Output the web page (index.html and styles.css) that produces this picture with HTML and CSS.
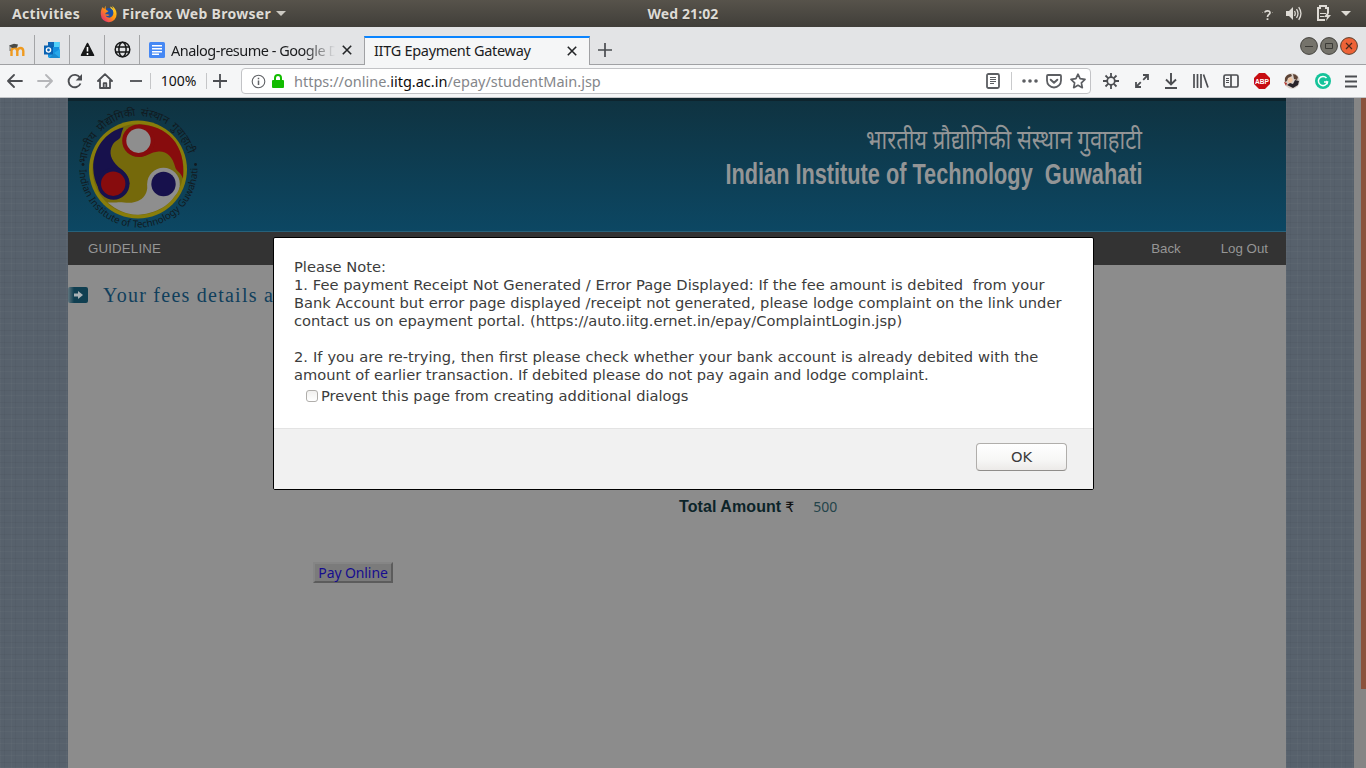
FILE: index.html
```html
<!DOCTYPE html>
<html lang="en">
<head>
<meta charset="utf-8">
<title>IITG Epayment Gateway</title>
<link rel="stylesheet" href="styles.css">
</head>
<body>
<div class="desktop">
<header class="topbar">
  <div class="top-left">
    <span class="activities">Activities</span>
    <svg class="firefox" width="18" height="18" viewBox="0 0 18 18"><defs><linearGradient id="ff" x1="1" y1="0" x2="0" y2="1"><stop offset="0" stop-color="#ffe226"/><stop offset=".45" stop-color="#ff980e"/><stop offset="1" stop-color="#e31587"/></linearGradient></defs><circle cx="9" cy="8.6" r="5.6" fill="#1c4fa3"/><path d="M6 .8c-1.2 1-1.5 2-1.3 3C3.600 3.500 3 2.600 2.800 2 1.500 3.600.600 6 .800 9.500A7.900 7.900 0 0 0 16.600 9C16.500 5.500 15 3 12 .7c1 1.600 1.500 3.500 1.200 5.300.900 4-1.500 7-4.500 6.600-1.700-.2-2.700-1-3-2 1.500.8 2.700.3 4-.7-1.700-.7-3-.9-4-.4-.8-1 .2-2 1.500-2.200l1.300-1.200C7.500 5.900 6.500 5.500 5.800 4.300 5.500 3 5.500 2 6 .8Z" fill="url(#ff)"/><path d="M10 1.500c3 1 4.500 3.500 4.400 7.500-1-4-2-4.500-3.500-5.500Z" fill="#ffd43b"/></svg>
    <span class="appname">Firefox Web Browser</span>
    <svg width="10" height="5" viewBox="0 0 10 5"><path d="M0 0h10L5 5z" fill="#ccc9c2"/></svg>
  </div>
  <div class="clock">Wed 21:02</div>
  <div class="top-right">
    <svg class="help" width="11" height="12" viewBox="0 0 11 12"><path d="M3 3.500C3 1.500 8 1 8 3.700 8 5.500 5.500 5.200 5.500 8" fill="none" stroke="#dedbd5" stroke-width="1.700"/><path d="M4.600 9.300h1.800v1.700H4.600z" fill="#dedbd5"/><path d="M0 3.500h1M10 3.500h1" stroke="#85817a"/></svg>
    <svg width="16" height="15" viewBox="0 0 16 15"><path d="M0 5h3l4-4v13l-4-4H0z" fill="#dedbd5"/><path d="M8.500 5q1.500 2.500 0 5M10.500 3.200q3 4.300 0 8.600M12.700 1.200q4.500 6.300 0 12.600" fill="none" stroke="#dedbd5" stroke-width="1.300"/></svg>
    <svg width="15" height="17" viewBox="0 0 15 17"><path d="M8 15H1V3h2V1h6v2h2v5" fill="none" stroke="#dedbd5" stroke-width="2"/><path d="M3 8h6v1H3zM3 11h4v1H3z" fill="#dedbd5"/><path d="m10 8-3 4h3l-1 4 5-6h-3l1-2z" fill="#dedbd5"/></svg>
    <svg width="10" height="5" viewBox="0 0 10 5"><path d="M0 0h10L5 5z" fill="#dedbd5"/></svg>
  </div>
</header>

<nav class="tabstrip">
  <div class="pin"><svg width="16" height="16" viewBox="0 0 16 16"><path d="M2.500 14V7.500M2.500 8.500Q3 6 5.500 6T8.300 9V14M8.300 9Q9 6 11.500 6T14.300 9V14" fill="none" stroke="#ef9a20" stroke-width="2.400"/><path d="m0 3.500 5-1.800 4 .8-1 3L3 6z" fill="#4b4b47"/><path d="M1 4v5" stroke="#555" stroke-width=".8"/></svg></div>
  <div class="pin"><svg width="16" height="16" viewBox="0 0 16 16"><path d="M4 0h11.500v15H4z" fill="#1490df"/><path d="M10 0h5.500v5H10z" fill="#50d0fa"/><path d="M4 0h6v5H4z" fill="#1066b5"/><path d="m4 15 12-8v9H5z" fill="#28a8ea"/><path d="m10 11 6 5H5z" fill="#1989cf"/><path d="M0 3.500h9v9H0z" fill="#0a62b2"/><circle cx="4.500" cy="8" r="2.100" fill="none" stroke="#fff" stroke-width="1.400"/></svg></div>
  <div class="pin"><svg width="15" height="15" viewBox="0 0 15 15"><path d="M7.500 1.500 13.500 13.300h-12z" fill="#171819" stroke="#171819" stroke-width="1.600" stroke-linejoin="round"/><path d="M7.500 5v4.500M7.500 11v2" stroke="#fff" stroke-width="1.600"/></svg></div>
  <div class="pin"><svg width="17" height="17" viewBox="0 0 17 17" fill="none" stroke="#171819" stroke-width="1.500"><circle cx="8.500" cy="8.500" r="7.300"/><ellipse cx="8.500" cy="8.500" rx="3.600" ry="7.300"/><path d="M1.500 6h14M1.500 11h14"/></svg></div>
  <div class="tab">
    <svg width="16" height="16" viewBox="0 0 16 16"><rect width="16" height="16" rx="1.500" fill="#4688f4"/><path d="M3 3.800h10M3 6.800h10M3 9.800h10M3 12.300h7" stroke="#fff" stroke-width="1.500"/></svg>
    <span class="tab-label faded">Analog-resume - Google D</span>
    <svg class="x" width="10" height="10" viewBox="0 0 10 10"><path d="m.8.8 8.400 8.400M9.200.8.8 9.200" stroke="#242628" stroke-width="1.600"/></svg>
  </div>
  <div class="tab active">
    <span class="tab-label">IITG Epayment Gateway</span>
    <svg class="x" width="10" height="10" viewBox="0 0 10 10"><path d="m.8.8 8.400 8.400M9.200.8.8 9.200" stroke="#242628" stroke-width="1.600"/></svg>
  </div>
  <svg class="newtab" width="14" height="14" viewBox="0 0 14 14"><path d="M7 0v14M0 7h14" stroke="#4a4c50" stroke-width="1.700"/></svg>
  <div class="winbuttons">
    <svg width="18" height="18" viewBox="0 0 18 18"><circle cx="9" cy="9" r="8.400" fill="#75736b" stroke="#44433f"/><path d="M5 9.500h8" stroke="#3b3a36"/></svg>
    <svg width="18" height="18" viewBox="0 0 18 18"><circle cx="9" cy="9" r="8.400" fill="#75736b" stroke="#44433f"/><path d="M5.500 6.500h7v5h-7z" fill="none" stroke="#3b3a36"/></svg>
    <svg width="18" height="18" viewBox="0 0 18 18"><circle cx="9" cy="9" r="8.400" fill="#ee6337" stroke="#59412f"/><path d="m6 6 6 6m0-6-6 6" stroke="#4b2a1c" stroke-width="1.200"/></svg>
  </div>
</nav>

<div class="toolbar">
  <div class="nav-icons">
    <svg width="16" height="14" viewBox="0 0 16 14" fill="none" stroke="#4c4e52" stroke-width="1.800" stroke-linecap="round" stroke-linejoin="round"><path d="M7 1 1 7l6 6M1.500 7H15"/></svg>
    <svg width="16" height="14" viewBox="0 0 16 14" fill="none" stroke="#b5b6b9" stroke-width="1.800" stroke-linecap="round" stroke-linejoin="round"><path d="m9 1 6 6-6 6M14.500 7H1"/></svg>
    <svg width="16" height="16" viewBox="0 0 16 16"><path d="M13.500 10.500a6.200 6.200 0 1 1-.5-5.800" fill="none" stroke="#4c4e52" stroke-width="1.900"/><path d="M15 1v6.500H8.700z" fill="#4c4e52"/></svg>
    <svg width="16" height="16" viewBox="0 0 16 16" fill="none" stroke="#4c4e52" stroke-width="1.800" stroke-linejoin="round" stroke-linecap="round"><path d="m1 8 7-6.800L15 8M3 7v8h10V7"/><path d="M6.700 15v-4.800h2.600V15" /></svg>
    <svg width="12" height="14" viewBox="0 0 12 14"><path d="M0 7h12" stroke="#4c4e52" stroke-width="1.800"/></svg>
  </div>
  <div class="zoom">100%</div>
  <svg class="plus" width="14" height="14" viewBox="0 0 14 14"><path d="M7 0v14M0 7h14" stroke="#4c4e52" stroke-width="1.800"/></svg>
  <div class="urlbar">
    <svg width="15" height="15" viewBox="0 0 15 15"><circle cx="7.500" cy="7.500" r="6.300" fill="none" stroke="#606266" stroke-width="1.100"/><path d="M7.500 6.500v4.500M7.500 3.800v1.500" stroke="#606266" stroke-width="1.500"/></svg>
    <svg width="12" height="14" viewBox="0 0 12 14"><path d="M3 7V4a3 3 0 0 1 6 0v3" fill="none" stroke="#12bc00" stroke-width="2"/><rect y="6" width="12" height="8" rx="1" fill="#12bc00"/></svg>
    <span class="url">https://online.<b>iitg.ac.in</b>/epay/studentMain.jsp</span>
    <div class="url-icons">
      <svg width="14" height="16" viewBox="0 0 14 16" fill="none" stroke="#5c5e62"><rect x="1" y="1" width="12" height="14" rx="1.500" stroke-width="1.800"/><path d="M4 4.500h6M4 6.500h6M4 8.500h6M4 10.500h4"/></svg>
      <i class="divider"></i>
      <svg width="16" height="4" viewBox="0 0 16 4" fill="#5c5e62"><circle cx="2" cy="2" r="1.800"/><circle cx="8" cy="2" r="1.800"/><circle cx="14" cy="2" r="1.800"/></svg>
      <svg width="16" height="15" viewBox="0 0 16 15" fill="none" stroke="#5c5e62" stroke-width="1.800" stroke-linecap="round" stroke-linejoin="round"><path d="M2 1h12q1 0 1 1v4.500a7 7 0 0 1-14 0V2q0-1 1-1Z"/><path d="m4.700 5.700 3.300 3 3.300-3" stroke-width="2"/></svg>
      <svg width="16" height="16" viewBox="0 0 16 16" fill="none" stroke="#5c5e62" stroke-width="1.700" stroke-linejoin="round"><path d="m8 1.200 2.100 4.500 4.900.7-3.600 3.400.9 4.900L8 12.300l-4.300 2.400.9-4.900L1 6.400l4.900-.7z"/></svg>
    </div>
  </div>
  <div class="ext">
    <svg width="16" height="16" viewBox="0 0 16 16" fill="none" stroke="#4c4e52" stroke-width="1.800"><circle cx="8" cy="8" r="3.800"/><path d="M8 0v4M8 12v4M0 8h4M12 8h4M2.500 2.500l2.600 2.600M10.900 10.900l2.600 2.600M13.500 2.500l-2.600 2.600M5.100 10.900l-2.600 2.600"/></svg>
    <svg width="16" height="16" viewBox="0 0 16 16" fill="none" stroke="#4c4e52" stroke-width="1.800"><path d="M9 2h5v5M14 2 9.200 6.800M7 14H2V9M2 14l4.800-4.800"/></svg>
    <svg width="14" height="16" viewBox="0 0 14 16" fill="none" stroke="#4c4e52" stroke-width="1.900"><path d="M7 0v11M2 6.500l5 5 5-5M1 15h12"/></svg>
    <svg width="16" height="14" viewBox="0 0 16 14" fill="none" stroke="#4c4e52" stroke-width="1.700"><path d="M1 0v14M4.500 0v14M8 0v14M10.500.5 15 13.500"/></svg>
    <svg width="16" height="14" viewBox="0 0 16 14" fill="none" stroke="#4c4e52" stroke-width="1.700"><rect x="1" y="1" width="14" height="12" rx="1.500"/><path d="M8 1v12"/><path d="M3 4.500h3M3 6.500h3M3 8.500h3" stroke-width="1"/></svg>
    <svg width="16" height="16" viewBox="0 0 16 16"><path d="M5 0h6l5 5v6l-5 5H5l-5-5V5z" fill="#c70d12"/><text class="abp" x="8" y="10.800" text-anchor="middle" textLength="14" lengthAdjust="spacingAndGlyphs">ABP</text></svg>
    <svg width="16" height="16" viewBox="0 0 16 16"><circle cx="8" cy="8" r="7.800" fill="#d9cfc8"/><path d="M1 5Q3 1 7 1l1 2-4 2-1 3-2 1zM9 1q3 0 5 3l-1 3-3-1z" fill="#5d4436"/><path d="M4 6l3-2 2 3-2 3-3-1z" fill="#f0c5a2"/><path d="M3 12l3-2 3 1 2-4 4 1-1 4-5 3z" fill="#292329"/><path d="M0 9l3 1-1 3z" fill="#b3342d"/></svg>
    <svg width="16" height="16" viewBox="0 0 16 16"><circle cx="8" cy="8" r="8" fill="#15c39a"/><path d="M11.500 5a4.600 4.600 0 1 0 1 4H9" fill="none" stroke="#fff" stroke-width="1.500"/><path d="m11 8 1.700 1-.7 2.500" fill="none" stroke="#fff"/></svg>
    <svg width="12" height="13" viewBox="0 0 12 13"><path d="M0 1.500h12M0 6.500h12M0 11.500h12" stroke="#4c4e52" stroke-width="1.900"/></svg>
  </div>
</div>

<main class="viewport">
  <div class="fabric"></div>
  <section class="page">
    <div class="banner">
      <svg class="logo" width="140" height="129" viewBox="-.5 0 140 129">
        <defs><path id="low" d="M11 66.500A59 59 0 0 0 129 66.500"/><path id="up" d="M17.700 61.500A52 52 0 0 1 121.300 61.500V72"/></defs>
        <circle cx="69.500" cy="67.500" r="49" fill="#887d0b"/>
        <circle cx="69.500" cy="67.500" r="45.500" fill="#75690b"/>
        <path d="M55 25.500C38 29 24.500 46 24.700 66c.3 8 2.300 14 4.300 18l16 13 16-15c-1-10-7-14-11-17-8-7-10-15-6-22 3-5 7-5 8-8q1-5 3-9.500Z" fill="#17114c"/>
        <path d="M70 22.500C98 23 118 42 114.500 76.500 112 70 108 69 107 66 104 54 98 49 90 49.500 82 50 78 55 70 55Z" fill="#870c0d"/>
        <path d="M39 100.500C48 108 58 113 70 112.700 92 111 106 100 111 84L95 66 79 82c0 6-1 11-6 15-11 7-18 2-25 3.500Z" fill="#8e8e8e"/>
        <circle cx="70" cy="38.700" r="16.300" fill="#870c0d"/><circle cx="45" cy="81.700" r="16" fill="#17114c"/><circle cx="95" cy="82" r="16.300" fill="#8e8e8e"/>
        <circle cx="70" cy="38.700" r="12.200" fill="#8e8e8e"/><circle cx="44.700" cy="81.700" r="12.200" fill="#870c0d"/><circle cx="95" cy="82" r="12.200" fill="#17114c"/>
        <text class="ring"><textPath href="#low" startOffset="1">Indian Institute of Technology Guwahati</textPath></text>
        <text class="ring hindi-ring"><textPath href="#up">भारतीय प्रौद्योगिकी संस्थान गुवाहाटी</textPath></text>
        <circle cx="14.500" cy="62.500" r="1.400" fill="#111a20"/><circle cx="127" cy="62.500" r="1.400" fill="#111a20"/>
      </svg>
      <svg class="institute" width="420" height="76" viewBox="0 0 420 76">
        <text class="hindi" x="142" y="30" textLength="276" lengthAdjust="spacingAndGlyphs">भारतीय प्रौद्योगिकी संस्थान गुवाहाटी</text>
        <text class="english" x="1.500" y="65" xml:space="preserve" textLength="417" lengthAdjust="spacingAndGlyphs">Indian Institute of Technology  Guwahati</text>
      </svg>
    </div>
    <div class="menu"><span class="guide">GUIDELINE</span><span class="menu-right"><span>Back</span><span>Log Out</span></span></div>
    <div class="heading"><svg width="20" height="16" viewBox="0 0 20 16"><defs><linearGradient id="ar"><stop offset="0" stop-color="#5f757e"/><stop offset=".3" stop-color="#103f51"/></linearGradient></defs><rect width="20" height="16" rx="2" fill="url(#ar)"/><path d="M6 6.500h4V4l5 4-5 4V9.500H6z" fill="#a9b1b5"/></svg><h1>Your fees details a</h1></div>
    <div class="total"><b>Total Amount</b><span class="rupee">₹</span><span class="amount">500</span></div>
    <div class="pay">Pay Online</div>
  </section>
  <div class="fabric"></div>
  <div class="scroll"><div class="thumb"></div></div>
  <div class="dialog">
    <div class="message"><p>Please Note:
<span class="note">1. Fee payment Receipt Not Generated / Error Page Displayed: If the fee amount is debited  from your
Bank Account but error page displayed /receipt not generated, please lodge complaint on the link under
contact us on epayment portal. (https://auto.iitg.ernet.in/epay/ComplaintLogin.jsp)</span>

<span class="retry">2. If you are re-trying, then first please check whether your bank account is already debited with the</span>
amount of earlier transaction. If debited please do not pay again and lodge complaint.</p>
    <div class="prevent"><span class="check"></span><span class="note">Prevent this page from creating additional dialogs</span></div></div>
    <div class="actions"><div class="ok">OK</div></div>
  </div>
</main>
</div>
</body>
</html>
```
FILE: styles.css
```css
* { box-sizing: border-box; }
body { margin: 0; font-family: "Noto Sans", sans-serif; }
svg { display: block; flex: none; }
.desktop { width: 1366px; height: 768px; overflow: hidden; display: flex; flex-direction: column; }
.topbar { height: 27px; flex: none; display: grid; grid-template-columns: 1fr auto 1fr; align-items: center; background: linear-gradient(#57534b, #403e39); color: #dedbd5; font-weight: 700; font-size: 14px; white-space: nowrap; text-shadow: 0 1px 1px #2225; }
.top-left { display: flex; align-items: center; padding-left: 12px; }
.activities { width: 88px; letter-spacing: .3px; }
.appname { margin-left: 4px; width: 154px; letter-spacing: .3px; }
.clock { letter-spacing: .1px; }
.top-right { display: flex; justify-content: flex-end; align-items: center; padding-right: 15px; }
.top-right svg { margin-left: 9px; }
.top-right svg:nth-child(2) { margin-left: 13px; }
.top-right svg:nth-child(3) { margin-left: 15px; }
.top-right .help { margin-top: 3px; }
.tabstrip { height: 38px; flex: none; display: flex; align-items: flex-end; background: #e3e4e6; box-shadow: inset 0 -1px #a0a1a4; color: #1b1c1e; }
.pin { width: 35px; height: 29px; border-right: 1px solid #a4a5a7; display: flex; align-items: center; justify-content: center; margin-bottom: 1px; }
.tab { width: 224px; height: 29px; margin-bottom: 1px; display: flex; align-items: center; padding: 0 12px 0 9px; font-size: 14.500px; white-space: nowrap; }
.tab-label { width: 166px; margin-left: 6px; letter-spacing: -.35px; }
.faded { letter-spacing: -.5px; -webkit-mask-image: linear-gradient(90deg, #000 80%, transparent 99%); mask-image: linear-gradient(90deg, #000 80%, transparent 99%); }
.x { margin-left: auto; }
.active { width: 226px; height: 29px; margin-bottom: 0; background: #f5f6f7; border: 1px solid #a0a1a4; border-top: 2px solid #0a84ff; border-bottom: 0; padding-bottom: 3px; }
.active .tab-label { margin-left: 0; width: 170px; letter-spacing: -.3px; }
.active .x { margin-top: 2px; }
.newtab { margin: 0 0 8px 8px; }
.winbuttons { margin: 0 8px 10px auto; display: flex; gap: 2px; }
.toolbar { height: 33px; flex: none; background: #f5f6f7; border-bottom: 1px solid #c3c5c8; display: flex; align-items: center; }
.nav-icons { display: flex; align-items: center; gap: 14px; padding-left: 7px; }
.nav-icons svg:last-child { margin-left: 3px; }
.zoom { margin-left: 8px; width: 57px; height: 16px; border: solid #c5c6c8; border-width: 0 1px; text-align: center; font-size: 14px; line-height: 16px; color: #111; }
.plus { margin-left: 6px; }
.urlbar { margin-left: 14px; width: 850px; height: 26px; border: 1px solid #c2c3c6; border-radius: 4px; background: #fff; display: flex; align-items: center; padding: 0 4px 0 9px; }
.urlbar > svg + svg { margin-left: 6px; }
.url { margin-left: 10px; color: #84868a; font-size: 14.500px; white-space: nowrap; }
.url b { font-weight: 400; color: #0c0c0d; }
.url-icons { margin-left: auto; display: flex; align-items: center; gap: 8px; }
.divider { width: 1px; height: 18px; background: #c9cacc; margin: 0 2px 0 3px; }
.ext { flex: 1; display: flex; align-items: center; justify-content: space-between; padding: 0 9px 0 12px; }
.abp { font: 700 7.500px "Liberation Sans", sans-serif; fill: #fff; }
.viewport { position: relative; flex: 1; min-height: 0; display: flex; background: #838383; }
.fabric { width: 68px; flex: none; background: repeating-linear-gradient(0deg, #ffffff06 0 1px, transparent 1px 5px, #0000000a 5px 6px, transparent 6px 12px), repeating-linear-gradient(90deg, #ffffff06 0 1px, transparent 1px 4px, #00000008 4px 5px, transparent 5px 11px), #57616c; }
.page { width: 1218px; flex: none; background: #8c8c8c; }
.banner { height: 134px; border-top: 3px solid #0e242d; border-bottom: 1px solid #27617a; background: linear-gradient(#0f3341, #0c4763); display: flex; justify-content: space-between; }
.logo { margin-top: 1px; overflow: visible; }
.institute { margin: 18px 142px 0 0; overflow: visible; }
.ring { font: 9.800px "Noto Sans", sans-serif; fill: #111a20; }
.hindi-ring { font-size: 11px; word-spacing: 2px; }
.hindi { font: 27px "Noto Sans Devanagari", "Noto Sans", sans-serif; fill: #939596; }
.english { font: 700 29px "Liberation Sans", Arial, sans-serif; fill: #939596; white-space: pre; }
.menu { height: 33px; background: #333; color: #969696; display: flex; align-items: center; justify-content: space-between; padding: 0 19px 0 20px; font: 13.300px "Liberation Sans", Arial, sans-serif; }
.guide { letter-spacing: .15px; }
.menu-right { display: flex; gap: 40px; margin-right: -1px; }
.heading { display: flex; align-items: center; height: 60px; }
h1 { margin: 0 0 0 15px; font: 20px "Liberation Serif", serif; letter-spacing: 1.250px; color: #103f5c; white-space: nowrap; }
.total { margin: 171px 0 0 611px; height: 22px; display: flex; align-items: center; color: #0c2429; font: 16px "Liberation Sans", sans-serif; }
.total b { letter-spacing: .08px; }
.rupee { margin-left: 4px; font-family: "DejaVu Sans", sans-serif; font-size: 14px; color: #111; }
.amount { margin: 0 0 2px 19px; color: #24444a; font: 14px "Noto Sans", sans-serif; }
.pay { width: 80px; height: 21px; margin: 44px 0 0 245px; border: 2px solid; border-color: #858585 #5c5c5c #5c5c5c #858585; background: #7b7b7b; color: #160d8f; font-size: 14px; line-height: 17px; text-align: center; letter-spacing: -.1px; }
.scroll { width: 12px; display: flex; justify-content: flex-end; background: #858585; }
.thumb { width: 5px; height: 591px; background: #8a523d; }
.dialog { position: absolute; left: 273px; top: 139px; width: 821px; height: 253px; border: 1px solid #000; border-radius: 2px; background: #fff; color: #3c3c3c; font: 14.670px/18px "DejaVu Sans", sans-serif; display: flex; flex-direction: column; overflow: hidden; }
.message { flex: 1; padding: 20px 20px 0; }
.message p { margin: 0; white-space: pre; }
.note { word-spacing: .13px; }
.retry { word-spacing: .3px; }
.prevent { display: flex; align-items: center; padding: 3px 0 0 12px; gap: 3px; }
.check { width: 12px; height: 12px; border: 1px solid #b0aeab; border-radius: 3px; background: linear-gradient(#f1f0ef, #fff); }
.actions { height: 61px; background: #f1f1f1; border-top: 1px solid #e3e3e3; padding: 14px 26px; display: flex; justify-content: flex-end; }
.ok { width: 91px; height: 28px; border: 1px solid #b0aeab; border-bottom-color: #8f8d8a; border-radius: 4px; background: linear-gradient(#fff, #f7f7f6 60%, #eceae8); text-align: center; line-height: 25px; }
```
